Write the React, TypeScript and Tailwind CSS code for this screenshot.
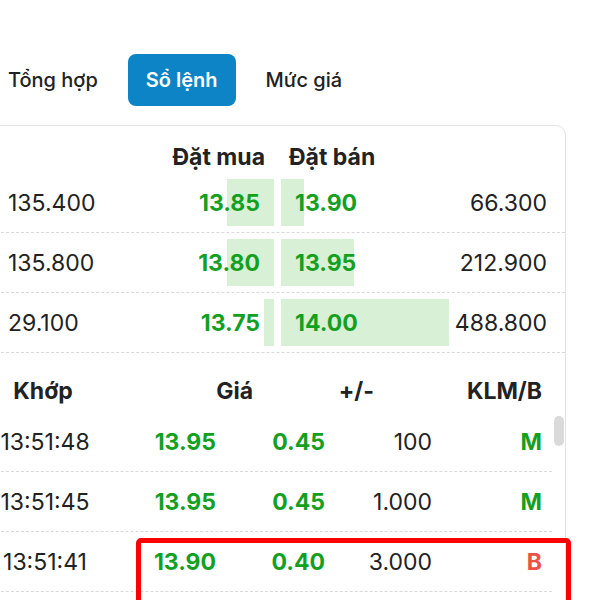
import React from "react";

const book = [
  { bidVol: "135.400", bid: "13.85", ask: "13.90", askVol: "66.300", b: 135.4, a: 66.3 },
  { bidVol: "135.800", bid: "13.80", ask: "13.95", askVol: "212.900", b: 135.8, a: 212.9 },
  { bidVol: "29.100", bid: "13.75", ask: "14.00", askVol: "488.800", b: 29.1, a: 488.8 },
];

const trades = [
  { time: "13:51:48", price: "13.95", chg: "0.45", vol: "100", side: "M" },
  { time: "13:51:45", price: "13.95", chg: "0.45", vol: "1.000", side: "M" },
  { time: "13:51:41", price: "13.90", chg: "0.40", vol: "3.000", side: "B" },
];

const BAR_MAX = 168;
const maxVol = Math.max(...book.map((r) => Math.max(r.a, r.b)));

export default function App() {
  return (
    <div className="relative h-[600px] w-[600px] overflow-hidden bg-white font-['Inter','Liberation_Sans',sans-serif] text-[#222]">
      <div className="-ml-[10px] w-[576px] pt-[54px]">
        {/* tabs */}
        <div className="flex gap-3 text-[20px] leading-[28px]">
          <div className="px-[18px] py-3 font-medium">Tổng hợp</div>
          <div className="rounded-lg bg-[#0c84c6] px-[18px] py-3 font-semibold text-white">Sổ lệnh</div>
          <div className="px-[18px] py-3 font-medium">Mức giá</div>
        </div>

        {/* card */}
        <div className="mt-[19px] rounded-[10px] border border-[#e4e4e4]">
          {/* order book */}
          <div className="flex h-[47px] px-[17px] pt-[19px] text-[23px] font-bold leading-[24px]">
            <div className="w-[98px]" />
            <div className="w-[168px] pr-[9px] text-right">Đặt mua</div>
            <div className="w-[7px]" />
            <div className="w-[168px] pl-[8px]">Đặt bán</div>
          </div>
          {book.map((r) => (
            <div key={r.bid} className="flex h-[60px] items-center border-b border-dashed border-[#d9d9d9] px-[17px] pt-[1px] text-[23px]">
              <div className="w-[98px]">{r.bidVol}</div>
              <div className="relative flex h-full w-[168px] items-center justify-end">
                <div className="absolute right-0 top-[5px] bottom-[6px] bg-[#d8f0d6]" style={{ width: (r.b / maxVol) * BAR_MAX }} />
                <span className="relative pr-[14px] font-bold text-[#14a01f]">{r.bid}</span>
              </div>
              <div className="w-[7px]" />
              <div className="relative flex h-full w-[168px] items-center">
                <div className="absolute left-0 top-[5px] bottom-[6px] bg-[#d8f0d6]" style={{ width: (r.a / maxVol) * BAR_MAX }} />
                <span className="relative pl-[14px] font-bold text-[#14a01f]">{r.ask}</span>
              </div>
              <div className="w-[98px] text-right">{r.askVol}</div>
            </div>
          ))}

          {/* matched trades */}
          <div className="flex h-[59px] items-end pb-[9px] text-[23px] font-bold leading-[24px]">
            <div className="w-[104px] text-center">Khớp</div>
            <div className="w-[158px] text-right">Giá</div>
            <div className="w-[121px] text-right">+/-</div>
            <div className="w-[168px] text-right">KLM/B</div>
          </div>
          <div className="flex h-[200px]">
            <div className="flex-1">
              {trades.map((t) => (
                <div key={t.time} className="flex h-[60px] items-center border-b border-dashed border-[#d9d9d9] pt-[2px] text-[23px]">
                  <div className="w-[108px] text-center">{t.time}</div>
                  <div className="w-[117px] text-right font-bold text-[#14a01f]">{t.price}</div>
                  <div className="w-[109px] text-right font-bold text-[#14a01f]">{t.chg}</div>
                  <div className="w-[107px] text-right">{t.vol}</div>
                  <div className={"w-[110px] text-right font-bold " + (t.side === "M" ? "text-[#14a01f]" : "text-[#ef5046]")}>{t.side}</div>
                </div>
              ))}
            </div>
            <div className="w-[13px] pl-[2px] pt-[4px]">
              <div className="h-[30px] w-[10px] rounded-full bg-[#dadada]" />
            </div>
          </div>
        </div>
      </div>

      {/* highlight */}
      <div className="absolute left-[136px] top-[538px] h-[120px] w-[435px] rounded-[5px] border-[5px] border-[#ff0000]" />
    </div>
  );
}
